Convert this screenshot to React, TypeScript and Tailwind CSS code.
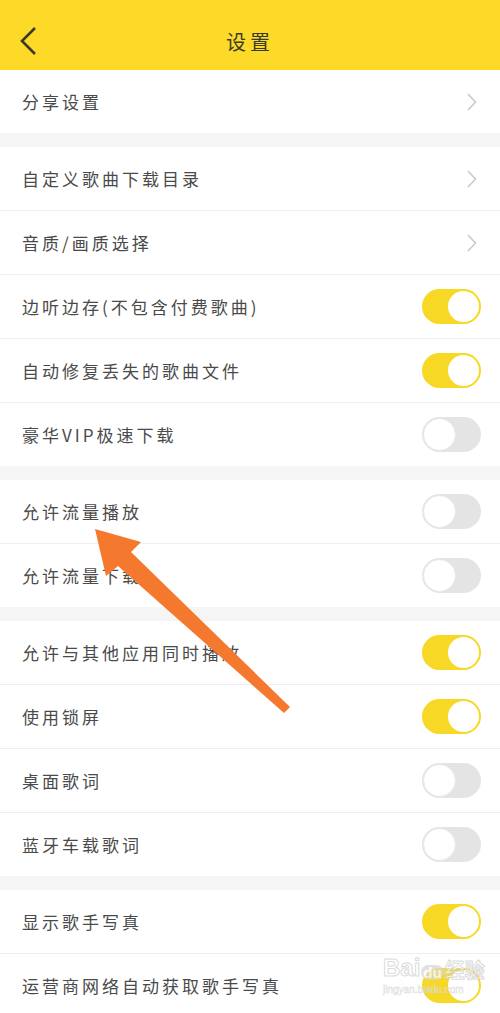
import React from "react";

type Item = { label: string; kind: "chevron" | "on" | "off" };

const groups: Item[][] = [
  [{ label: "分享设置", kind: "chevron" }],
  [
    { label: "自定义歌曲下载目录", kind: "chevron" },
    { label: "音质/画质选择", kind: "chevron" },
    { label: "边听边存(不包含付费歌曲)", kind: "on" },
    { label: "自动修复丢失的歌曲文件", kind: "on" },
    { label: "豪华VIP极速下载", kind: "off" },
  ],
  [
    { label: "允许流量播放", kind: "off" },
    { label: "允许流量下载", kind: "off" },
  ],
  [
    { label: "允许与其他应用同时播放", kind: "on" },
    { label: "使用锁屏", kind: "on" },
    { label: "桌面歌词", kind: "off" },
    { label: "蓝牙车载歌词", kind: "off" },
  ],
  [
    { label: "显示歌手写真", kind: "on" },
    { label: "运营商网络自动获取歌手写真", kind: "on" },
  ],
];

function Toggle({ on }: { on: boolean }) {
  return on ? (
    <div className="w-[59px] h-[35px] rounded-full bg-[#f7d824] flex items-center justify-end pr-[2px]">
      <div className="w-[31px] h-[31px] rounded-full bg-white" />
    </div>
  ) : (
    <div className="w-[59px] h-[35px] rounded-full bg-[#e4e4e4] flex items-center justify-start pl-[1px]">
      <div className="w-[33px] h-[33px] rounded-full bg-white border border-[#e8e8e8]" />
    </div>
  );
}

function Chevron() {
  return (
    <svg width="12" height="18" viewBox="0 0 12 18" className="mr-[22px]">
      <path d="M2 1 L9.5 9 L2 17" fill="none" stroke="#c9c9c9" strokeWidth="1.6" />
    </svg>
  );
}

function Row({ item, first }: { item: Item; first: boolean }) {
  return (
    <div className={`${first ? "" : "border-t border-[#efefef]"} bg-white`}>
      <div className="h-[63px] flex items-center justify-between pl-[22px]">
        <span className="text-[17px] tracking-[3px] text-[#4a4a4a]">{item.label}</span>
        {item.kind === "chevron" ? (
          <Chevron />
        ) : (
          <div className="mr-[19px]">
            <Toggle on={item.kind === "on"} />
          </div>
        )}
      </div>
    </div>
  );
}

export default function App() {
  return (
    <div
      className="relative w-[500px] h-[1013px] overflow-hidden bg-[#f5f5f5]"
      style={{ fontFamily: '"Noto Sans CJK SC", "Noto Sans", sans-serif' }}
    >
      <div className="h-[70px] bg-[#fcda27] flex items-center relative pt-[13px]">
        <svg width="20" height="30" viewBox="0 0 20 30" className="absolute left-[19px] top-[27px]">
          <path d="M16 1 L3 14 L16 27" fill="none" stroke="#3a3a2a" strokeWidth="2.6" />
        </svg>
        <div className="flex-1 text-center text-[20px] tracking-[4px] text-[#3a3a2a]">设置</div>
      </div>
      <div className="flex flex-col gap-[14px]">
        {groups.map((g, gi) => (
          <div key={gi} className="flex flex-col">
            {g.map((it, i) => (
              <Row key={i} item={it} first={i === 0} />
            ))}
          </div>
        ))}
      </div>

      {/* Orange annotation arrow */}
      <svg className="absolute left-0 top-0 pointer-events-none" width="500" height="1013" viewBox="0 0 500 1013">
        <polygon
          points="95,529 141,542 131,552 290,707 284,713 118,566 106,576"
          fill="#f4792e"
        />
      </svg>

      {/* Baidu watermark */}
      <div className="absolute left-[383px] top-[956px] pointer-events-none flex flex-col items-start opacity-75">
        <div className="flex items-end leading-none">
          <span className="text-[24px] font-bold text-white [-webkit-text-stroke:1px_#cfcfcf] [font-family:'Liberation_Sans',sans-serif]">Bai</span>
          <span className="text-[15px] font-bold text-white bg-[#d8d8d8] rounded-full px-[2px] mx-[1px] [font-family:'Liberation_Sans',sans-serif]">du</span>
          <span className="text-[20px] font-bold text-white [-webkit-text-stroke:1px_#cfcfcf]">经验</span>
        </div>
        <div className="text-[10px] text-white [-webkit-text-stroke:0.5px_#d0d0d0] [font-family:'Liberation_Sans',sans-serif] mt-[2px]">
          jingyan.baidu.com
        </div>
      </div>
    </div>
  );
}
